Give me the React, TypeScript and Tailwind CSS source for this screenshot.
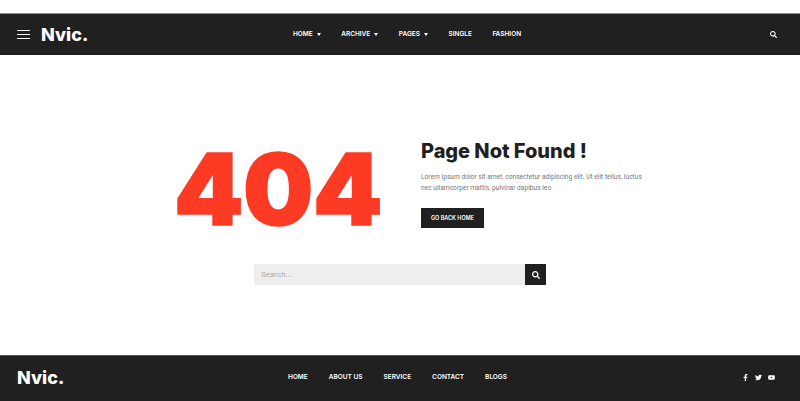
import { FaFacebookF, FaTwitter, FaYoutube, FaSearch } from "react-icons/fa";

const heading = "font-['Inter','Liberation_Sans',sans-serif]";

const topLinks = [
	{ label: "HOME", caret: true },
	{ label: "ARCHIVE", caret: true },
	{ label: "PAGES", caret: true },
	{ label: "SINGLE", caret: false },
	{ label: "FASHION", caret: false },
];

const footerLinks = ["HOME", "ABOUT US", "SERVICE", "CONTACT", "BLOGS"];

function Caret() {
	return <span className="ml-[4px] h-0 w-0 border-x-[2.5px] border-t-[3px] border-x-transparent border-t-white" />;
}

export default function App() {
	return (
		<div className={`flex h-[401px] w-[800px] flex-col overflow-hidden bg-white ${heading}`}>
			<div className="h-[13px] shrink-0 bg-white" />
			<header className="relative flex h-[42px] shrink-0 items-center justify-center border-t border-t-[#8a8a8a] bg-[#202020] text-white">
				<div className="absolute left-[17px] top-0 flex h-full items-center">
					<div className="flex w-[13px] flex-col gap-[3px]">
						<span className="h-px bg-white" />
						<span className="h-px bg-white" />
						<span className="h-px bg-white" />
					</div>
					<span className="ml-[11px] text-[18px] leading-none font-extrabold">Nvic.</span>
				</div>
				<nav className="ml-[14px] flex items-center gap-[20.5px]">
					{topLinks.map((l) => (
						<a key={l.label} className="flex items-center text-[6.5px] leading-none font-semibold">
							{l.label}
							{l.caret && <Caret />}
						</a>
					))}
				</nav>
				<FaSearch className="absolute left-[770px] top-[17px] text-[7px]" />
			</header>

			<main className="flex flex-1 flex-col items-center">
				<div className="ml-[24px] mt-[84px] flex h-[106px] w-[470px] items-start">
					<div className="ml-[-3px] w-[247px] shrink-0 text-[99px] leading-[100px] font-black tracking-[-0.5px] text-[#fd3a24] [-webkit-text-stroke:1.5px_#fd3a24]">404</div>
					<div>
						<h1 className="text-[20px] leading-[24px] font-extrabold tracking-[-0.05px] text-[#1f1f1f]">Page Not Found !</h1>
						<p className="mt-[9px] w-[226px] font-['Roboto',sans-serif] text-[6.65px] leading-[11px] text-[#777]">
							Lorem ipsum dolor sit amet, consectetur adipiscing elit. Ut elit tellus, luctus nec ullamcorper mattis, pulvinar dapibus leo
						</p>
						<button className="mt-[14px] flex h-[20px] w-[63px] items-center justify-center bg-[#202020] text-[5.5px] font-semibold text-white">
							GO BACK HOME
						</button>
					</div>
				</div>
				<div className="mt-[19px] flex h-[21px] w-[292px]">
					<div className="flex flex-1 items-center bg-[#eeeeee] pl-[7px] font-['Roboto',sans-serif] text-[8px] text-[#aaa]">Search...</div>
					<div className="flex w-[21px] items-center justify-center bg-[#202020] text-white">
						<FaSearch className="text-[8px]" />
					</div>
				</div>
			</main>

			<footer className="relative flex h-[46px] shrink-0 items-center justify-center border-t border-t-[#555] bg-[#202020] text-white">
				<span className="absolute left-[17px] top-[13px] text-[18px] leading-none font-extrabold">Nvic.</span>
				<nav className="mb-[2px] ml-[-5px] flex items-center gap-[21px]">
					{footerLinks.map((l) => (
						<a key={l} className="text-[6.5px] leading-none font-semibold">
							{l}
						</a>
					))}
				</nav>
				<div className="absolute left-[742px] top-[18px] flex items-center gap-[6px] text-[7px]">
					<FaFacebookF />
					<FaTwitter />
					<FaYoutube />
				</div>
			</footer>
		</div>
	);
}
